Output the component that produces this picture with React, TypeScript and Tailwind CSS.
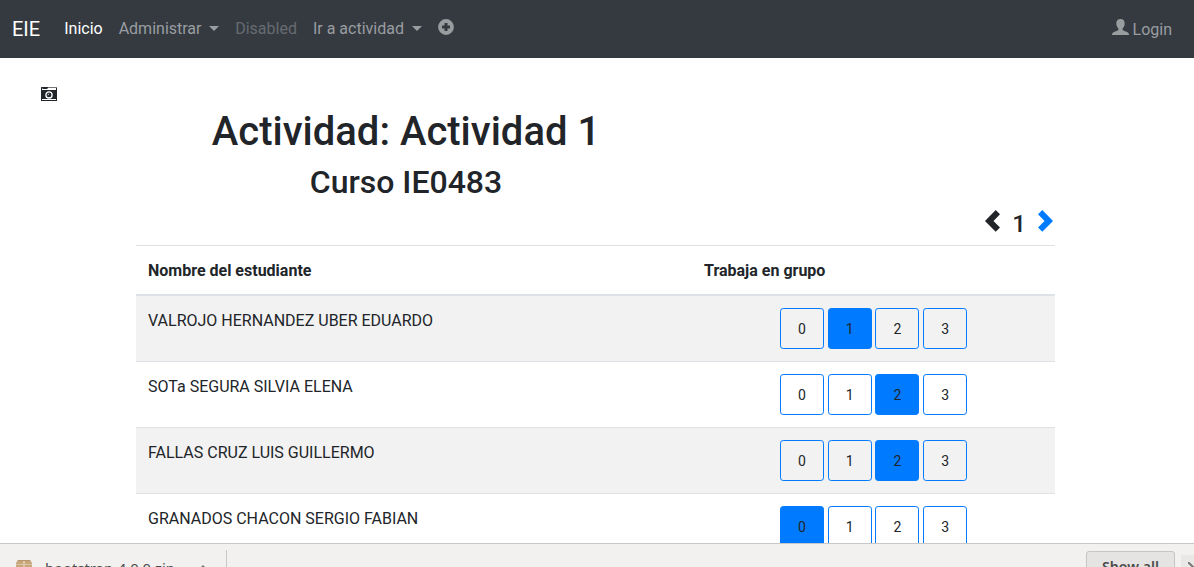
import React from "react";

const students = [
  { name: "VALROJO HERNANDEZ UBER EDUARDO", group: 1 },
  { name: "SOTa SEGURA SILVIA ELENA", group: 2 },
  { name: "FALLAS CRUZ LUIS GUILLERMO", group: 2 },
  { name: "GRANADOS CHACON SERGIO FABIAN", group: 0 },
];

function Caret() {
  return (
    <span className="-mt-px ml-[7.7px] inline-block border-x-[5px] border-t-[5px] border-x-transparent border-t-current" />
  );
}

function PlusIcon() {
  return (
    <svg className="block h-4 w-4" viewBox="0 0 16 16" fill="currentColor">
      <path
        fillRule="evenodd"
        d="M8 .1a7.9 7.9 0 1 0 0 15.8A7.9 7.9 0 0 0 8 .1ZM6.500 4h3v2.500H12v3H9.500V12h-3V9.500H4v-3h2.500Z"
      />
    </svg>
  );
}

function UserIcon() {
  return (
    <svg className="block h-4 w-[17px]" viewBox="0 0 17 16" fill="currentColor">
      <path d="M8.5 0C6 0 4.3 1.600 4.300 4.200C4.300 6.500 5.200 8.300 6.400 9.500V10.900C5.800 11.600 2.600 12.500 1.100 13.500C.4 14 .1 14.900 0 16H17C16.900 14.900 16.600 14 15.900 13.500C14.400 12.500 11.200 11.600 10.600 10.900V9.500C11.800 8.300 12.700 6.500 12.700 4.200C12.700 1.600 11 0 8.500 0Z" />
    </svg>
  );
}

function CameraIcon() {
  return (
    <svg className="block h-[14px] w-4" viewBox="0 0 16 14">
      <path fill="#212529" d="M.5 0h15a.5.5 0 0 1 .5.5v13a.5.5 0 0 1-.5.5H.5a.5.5 0 0 1-.5-.5V.5A.5.5 0 0 1 .5 0Z" />
      <path fill="#ffffff" d="M1 2h5l1-1h8v2H7L6.500 3H1ZM1 12h14v1H1Z" />
      <path fill="#74777a" d="M7 0h9v1H7ZM1 1h1v1H1Z" />
      <circle cx="8" cy="7.9" r="3.100" fill="#212529" stroke="#ffffff" strokeWidth="1.300" />
      <path d="M7 8.200a1.200 1.200 0 0 1 1.200-1.200" fill="none" stroke="#ffffff" strokeWidth=".8" />
    </svg>
  );
}

function Chevron({ right = false }: { right?: boolean }) {
  return (
    <svg className="block h-[22px] w-[15px]" viewBox="0 0 15 22" fill="currentColor">
      {right ? (
        <path d="M4.300 0 15 10.900 4.300 21.800 0 17.500 6.500 10.900 0 4.300Z" />
      ) : (
        <path d="M10.700 0 15 4.300 8.500 10.900 15 17.500 10.700 21.800 0 10.900Z" />
      )}
    </svg>
  );
}

function PackageIcon() {
  return (
    <svg className="mt-4 block h-4 w-4 shrink-0" viewBox="0 0 16 16">
      <path fill="#c9a77c" d="M2 0h12l2 3v13H0V3Z" />
      <path fill="#b99768" d="M2 0h12l.6 1H1.400Z" />
      <path fill="#dcc6a3" d="M7 1h2v15H7ZM0 4h16v1H0Z" />
    </svg>
  );
}

export default function App() {
  return (
    <div className="flex h-[567px] w-full flex-col overflow-hidden bg-white font-[Roboto,sans-serif] text-base text-[#212529]">
      <nav className="flex h-[58px] shrink-0 items-center bg-[#343a40] pr-[22px] pl-3 text-[#9a9da0]">
        <span className="mr-6 text-xl text-white">EIE</span>
        <span className="mr-4 text-white">Inicio</span>
        <span className="mr-4 flex items-center">Administrar<Caret /></span>
        <span className="mr-4 text-[#676b70]">Disabled</span>
        <span className="mr-4 flex items-center">Ir a actividad<Caret /></span>
        <span className="-mt-1"><PlusIcon /></span>
        <span className="ml-auto flex items-center gap-1 pt-px">
          <span className="-mt-[5px]"><UserIcon /></span>
          Login
        </span>
      </nav>

      <main className="min-h-0 flex-1 overflow-hidden">
        <div className="flex h-[50px] pt-[29px] pl-[41px]"><CameraIcon /></div>
        <div className="ml-[136px] w-[919px]">
          <header className="w-[540px] text-center font-medium">
            <h1 className="mb-[7px] text-[40px] leading-[48px]">Actividad: Actividad 1</h1>
            <h2 className="text-[32px] leading-[38px]">Curso IE0483</h2>
          </header>
          <div className="flex h-[44px] items-start justify-end pt-[9px] pr-[2px]">
            <Chevron />
            <span className="ml-3 mr-[12px] text-2xl leading-7 font-medium">1</span>
            <span className="text-[#007bff]"><Chevron right /></span>
          </div>

          <table className="w-full table-fixed border-separate border-spacing-0 text-left">
            <thead>
              <tr>
                <th className="h-[51px] w-[556px] border-t border-b-2 border-[#dee2e6] px-3 pt-[13px] pb-[11px] align-top leading-6 font-bold">Nombre del estudiante</th>
                <th className="border-t border-b-2 border-[#dee2e6] px-3 pt-[13px] pb-[11px] align-top leading-6 font-bold">Trabaja en grupo</th>
              </tr>
            </thead>
            <tbody>
              {students.map((student) => (
                <tr key={student.name} className="align-top odd:bg-[#f2f2f2]">
                  <td className="h-[66px] border-b border-[#dee2e6] px-3 pt-[13px]">{student.name}</td>
                  <td className="border-b border-[#dee2e6] pt-3 pl-[87.850px]">
                    <div className="flex gap-[3.760px] text-sm">
                      {[0, 1, 2, 3].map((group) => (
                        <button
                          key={group}
                          className={
                            group === student.group
                              ? "h-[41px] w-11 rounded-[3.200px] border border-[#007bff] bg-[#007bff]"
                              : "h-[41px] w-11 rounded-[3.200px] border border-[#007bff]"
                          }
                        >
                          {group}
                        </button>
                      ))}
                    </div>
                  </td>
                </tr>
              ))}
            </tbody>
          </table>
        </div>
      </main>

      <footer className="flex h-6 shrink-0 items-start overflow-hidden border-t border-[#c8c8c8] bg-[#f2f1f0] font-['Noto_Sans',sans-serif] text-[#4c4c4c]">
        <div className="ml-4 flex items-start">
          <PackageIcon />
          <span className="mt-[14px] ml-[13px] w-[134px] text-[14.800px] leading-5 whitespace-nowrap">bootstrap-4.0.0.zip</span>
        </div>
        <svg className="mt-[21px] ml-[18px] h-2 w-4 shrink-0" viewBox="0 0 16 8" fill="#777777">
          <path d="M6 0 12 6H0Z" />
        </svg>
        <div className="mt-[6px] ml-[13px] h-6 w-px shrink-0 bg-[#c8c8c8]" />
        <button className="mt-[7px] ml-auto flex h-[30px] w-[89px] items-start justify-center rounded-[3px] border border-[#c5c5c4] bg-[#e5e4e2] pt-[5px] text-[14.200px] leading-5 font-semibold">
          Show all
        </button>
        <div className="mt-[11px] ml-[6px] h-5 w-[13px] overflow-hidden bg-[#e9e8e7] pt-[7px] pl-[7px]">
          <svg className="block h-3 w-3" viewBox="0 0 12 12" fill="none" stroke="#777777" strokeWidth="2">
            <path d="m0 0 12 12M12 0 0 12" />
          </svg>
        </div>
      </footer>
    </div>
  );
}
